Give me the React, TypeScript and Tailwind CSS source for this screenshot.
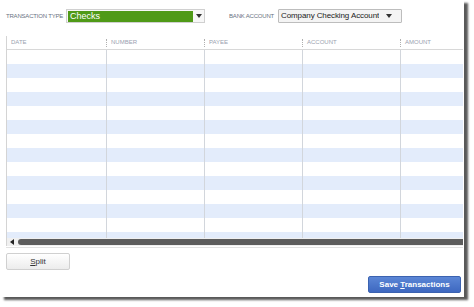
import React from 'react';

const columns = [
  { label: 'DATE', w: 'w-[99px]' },
  { label: 'NUMBER', w: 'w-[98px]' },
  { label: 'PAYEE', w: 'w-[98px]' },
  { label: 'ACCOUNT', w: 'w-[98px]' },
  { label: 'AMOUNT', w: 'flex-1' },
];

const Caret = () => (
  <svg width="6" height="4" viewBox="0 0 6 4">
    <path d="M0 0h6L3 4z" fill="#333" />
  </svg>
);

export default function App() {
  const rows = Array.from({ length: 14 });

  return (
    <div className="w-[474px] h-[307px] bg-white font-['Liberation_Sans',sans-serif]">
      <div className="w-[464px] h-[297px] bg-white shadow-[4px_3px_2px_rgba(60,60,60,0.85)] flex flex-col">
        {/* filters */}
        <div className="shrink-0 flex items-center h-[36px] pl-[6px] pb-[4px]">
          <span className="text-[6px] text-gray-500 tracking-[-0.2px] whitespace-nowrap">TRANSACTION TYPE</span>
          <div className="ml-[3px] flex items-center h-[14px] w-[139px] border border-[#d0d0d0] bg-[#f7f7f7]">
            <div className="h-[11px] w-[125px] ml-[1px] bg-[#4f9a17] text-white text-[9px] leading-[11px] pl-[2px]">Checks</div>
            <div className="flex-1 flex justify-center"><Caret /></div>
          </div>
          <span className="ml-[24px] text-[6px] text-gray-500 tracking-[-0.2px] whitespace-nowrap">BANK ACCOUNT</span>
          <div className="ml-[4px] flex items-center h-[14px] w-[124px] border border-[#bdbdbd] bg-[#f4f4f4] rounded-[1px]">
            <span className="min-w-0 overflow-hidden pl-[2px] text-[8px] tracking-[-0.1px] text-[#222] whitespace-nowrap">Company Checking Account</span>
            <div className="shrink-0 ml-auto mr-[9px]"><Caret /></div>
          </div>
        </div>

        {/* table */}
        <div className="shrink-0 ml-[6px] w-[457px] border-l border-[#d4d4d4] flex flex-col">
          <div className="flex h-[14px] border-b border-[#d8d8d8]">
            {columns.map((c, i) => (
              <div key={c.label} className={`${c.w} flex items-center`}>
                {i > 0 && <div className="h-[8px] border-l border-dotted border-[#b0b0b0]" />}
                <span className="pl-[4px] text-[6px] text-gray-400">{c.label}</span>
              </div>
            ))}
          </div>
          <div className="h-[188px] overflow-hidden">
            {rows.map((_, r) => (
              <div key={r} className={`flex h-[14px] ${r % 2 === 1 ? 'bg-[#e3ecfb]' : 'bg-white'}`}>
                {columns.map((c, i) => (
                  <div key={c.label} className={`${c.w} ${i > 0 ? 'border-l border-[#d2d6dc]' : ''}`} />
                ))}
              </div>
            ))}
          </div>
          {/* scrollbar */}
          <div className="h-[8px] flex items-center bg-[#f0f0f0]">
            <svg width="10" height="6" viewBox="0 0 10 6" className="ml-[1px]">
              <path d="M6 0v6L2 3z" fill="#222" />
            </svg>
            <div className="h-[6px] flex-1 rounded-l-[3px] bg-[#5d5d5d]" />
          </div>
        </div>
        <div className="shrink-0 ml-[6px] w-[457px] h-px bg-[#e2e2e2] mt-[1px]" />

        {/* actions */}
        <div className="shrink-0 pl-[6px] pt-[5px] flex">
          <button className="block w-[64px] h-[17px] border border-[#d0d0d0] rounded-[2px] bg-gradient-to-b from-white to-[#ececec] text-[8px] leading-[15px] text-[#333]">
            <span className="underline">S</span>plit
          </button>
        </div>
        <div className="shrink-0 flex justify-end pr-[3px] pt-[6px]">
          <button className="block w-[93px] h-[17px] rounded-[2px] border border-[#3b62b0] bg-gradient-to-b from-[#5b86d6] to-[#3e68c0] text-white text-[8px] leading-[15px] font-bold">
            Save <span className="underline">T</span>ransactions
          </button>
        </div>
      </div>
    </div>
  );
}
